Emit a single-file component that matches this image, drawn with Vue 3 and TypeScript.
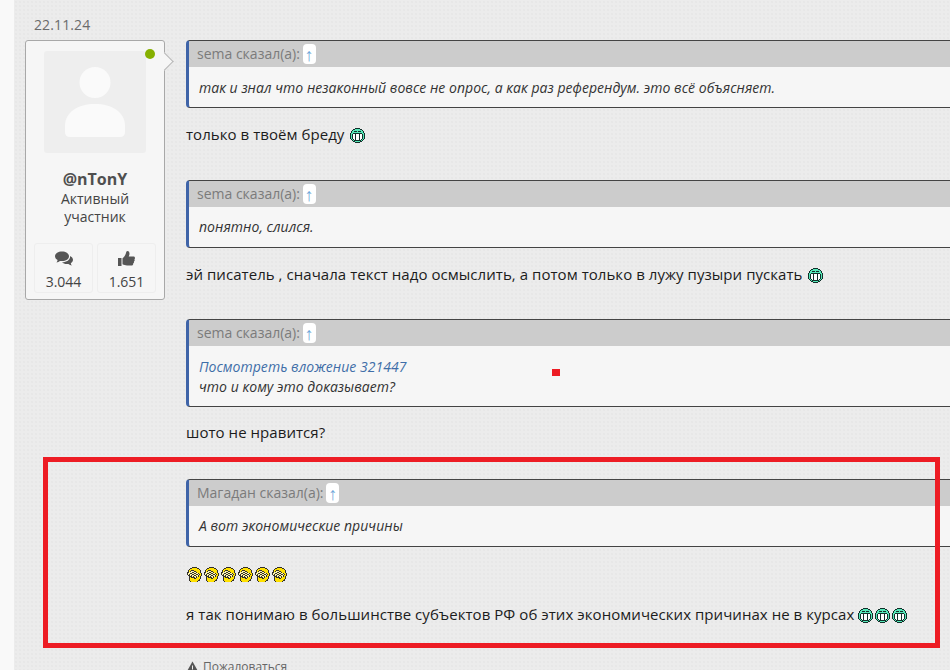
<script setup lang="ts">
interface Pixel { x: number; y: number; c: string }

const colors: Record<string, string> = {
  k: '#12302a',
  t: '#55e8b8',
  w: '#ffffff',
  d: '#33302a',
  y: '#ffe100',
  e: '#fff7b0',
}

const toPixels = (rows: string[]): Pixel[] =>
  rows.flatMap((row, y) =>
    [...row].flatMap((ch, x) => (colors[ch] ? [{ x, y, c: colors[ch] }] : [])),
  )

const grinPixels = toPixels([
  '.....kkkkk.....',
  '...kktttttkk...',
  '..ktttttttttk..',
  '.kttkkktkkkttk.',
  '.ktttttttttttk.',
  'kttkkkkkkkkkttk',
  'ktkwwkwwwkwwktk',
  'ktkwwkwwwkwwktk',
  'ktkwwkwwwkwwktk',
  'ktkwwkwwwkwwktk',
  'ktkwwkwwwkwwktk',
  '.ktkwkwwwkwktk.',
  '..ktkkkkkkktk..',
  '...kktttttkk...',
  '.....kkkkk.....',
])

const palmPixels = toPixels([
  '.....ddddd.....',
  '...ddyyyyydd...',
  '..dyyyyyyyyyd..',
  '.dyydddyyyyyyd.',
  '.dydeeeddyyyyd.',
  'ddeeeddeedyyyd.',
  'deeddeeddeedyyd',
  'dedeeddeeddedyd',
  '.ddedeeddeedyyd',
  '..dddedeededyd.',
  '..dyddddedyyyd.',
  '..dyyyyddyyyyd.',
  '..dyyyyyyyyyd..',
  '..dyyyyyyyydd..',
  '...dyyyyyyd....',
])

const times = (n: number): number[] => Array.from({ length: n }, (_, i) => i)
</script>

<template>
  <div class="page">
    <svg class="defs" width="0" height="0" aria-hidden="true">
      <symbol id="grin" viewBox="0 0 15 15" shape-rendering="crispEdges">
        <rect v-for="p in grinPixels" :key="`${p.x}-${p.y}`" :x="p.x" :y="p.y" width="1" height="1" :fill="p.c" />
      </symbol>
      <symbol id="palm" viewBox="0 0 15 15" shape-rendering="crispEdges">
        <rect v-for="p in palmPixels" :key="`${p.x}-${p.y}`" :x="p.x" :y="p.y" width="1" height="1" :fill="p.c" />
      </symbol>
    </svg>

    <div class="strip"></div>
    <main class="content">
      <div class="date">22.11.24</div>
      <div class="post">
        <aside class="card">
          <span class="online"></span>
          <span class="arrow"></span>
          <div class="avatar">
            <svg width="60" height="71" viewBox="0 0 60 71">
              <circle cx="30" cy="15.500" r="15.500" fill="#fafafa" />
              <path d="M0 65V59C0 45 13 37 30 37s30 8 30 22v6q0 5-5 5H5q-5 0-5-5z" fill="#fafafa" />
            </svg>
          </div>
          <div class="name">@nTonY</div>
          <div class="role">Активный участник</div>
          <div class="stats">
            <div class="stat">
              <svg width="18" height="15" viewBox="0 0 18 15">
                <path d="M7 0c4 0 7 2 7 4.800S11 9.600 7 9.600c-.7 0-1.400 0-2-.2C4 10.300 2.800 10.800 1.500 11c.6-.7 1-1.500 1.100-2.400C1 7.700 0 6.300 0 4.800 0 2 3 0 7 0z" fill="#555" />
                <path d="M15 4.500c1.800.8 3 2.200 3 3.800 0 1.400-.9 2.600-2.200 3.400.1.900.5 1.600 1.100 2.300-1.300-.2-2.500-.7-3.500-1.600-.5.100-1 .2-1.600.2-2 0-3.700-.7-4.700-1.800 4.600 0 8-2.500 8-5.800z" fill="#555" />
              </svg>
              <span>3.044</span>
            </div>
            <div class="stat">
              <svg width="17" height="16" viewBox="0 0 17 16">
                <path d="M0 7h3.500v8H0z" fill="#555" />
                <path d="M4.500 7.200c1.500-1 3-3 3.500-5.200.2-1.200.6-2 1.500-2 1.400 0 2 1.400 2 2.800 0 1-.4 2-.8 2.700H15.500c.9 0 1.500.7 1.500 1.500 0 .5-.2 1-.6 1.300.2.300.3.600.3.900 0 .6-.3 1.100-.8 1.300.1.300.1.500.1.700 0 .6-.4 1.100-.9 1.300 0 .2.100.300.100.500 0 .9-.7 1.500-1.600 1.500H9c-1.700 0-3-.5-4.500-1.200z" fill="#555" />
              </svg>
              <span>1.651</span>
            </div>
          </div>
        </aside>

        <div class="thread">
          <blockquote class="quote q1">
            <div class="qhead">sema сказал(а): <span class="up">↑</span></div>
            <div class="qbody">так и знал что незаконный вовсе не опрос, а как раз референдум. это всё объясняет.</div>
          </blockquote>
          <p class="msg m1">только в твоём бреду <svg class="face"><use href="#grin" /></svg></p>

          <blockquote class="quote q2">
            <div class="qhead">sema сказал(а): <span class="up">↑</span></div>
            <div class="qbody">понятно, слился.</div>
          </blockquote>
          <p class="msg m2">эй писатель , сначала текст надо осмыслить, а потом только в лужу пузыри пускать <svg class="face"><use href="#grin" /></svg></p>

          <blockquote class="quote q3">
            <div class="qhead">sema сказал(а): <span class="up">↑</span></div>
            <div class="qbody two">
              <a class="attach">Посмотреть вложение 321447</a>
              <div>что и кому это доказывает?</div>
            </div>
          </blockquote>
          <p class="msg m3">шото не нравится?</p>

          <blockquote class="quote q4">
            <div class="qhead">Магадан сказал(а): <span class="up">↑</span></div>
            <div class="qbody">А вот экономические причины</div>
          </blockquote>
          <div class="palms">
            <svg v-for="i in times(6)" :key="i" class="pface"><use href="#palm" /></svg>
          </div>
          <p class="msg m4">я так понимаю в большинстве субъектов РФ об этих экономических причинах не в курсах <span class="faces"><svg v-for="i in times(3)" :key="i" class="face tight"><use href="#grin" /></svg></span></p>
          <div class="report">
            <svg width="13" height="12" viewBox="0 0 13 12">
              <path d="M6.500 0.500 13 12H0z" fill="#555" />
              <path d="M6 4.500h1v4H6zM6 9.300h1v1.200H6z" fill="#eee" />
            </svg>
            <span>Пожаловаться</span>
          </div>
        </div>
      </div>
    </main>

    <div class="redbox"></div>
    <div class="reddot"></div>
  </div>
</template>

<style scoped>
.page {
  position: relative;
  display: flex;
  width: 950px;
  height: 670px;
  overflow: hidden;
  font-family: "Open Sans", "Noto Sans", sans-serif;
  color: #222;
  background-color: #f9f9f9;
}
.defs { position: absolute; }
.strip { width: 14px; flex: none; }
.content {
  flex: 1;
  min-width: 0;
  padding-top: 15px;
  background-color: #ececec;
  background-image: radial-gradient(circle, #e7e7e7 0.7px, transparent 0.8px);
  background-size: 4px 4px;
}
.date {
  padding-left: 20px;
  font-size: 14px;
  line-height: 19px;
  letter-spacing: 0.12px;
  color: #6b6b6b;
  margin-bottom: 6px;
}
.post { display: flex; padding-left: 11px; gap: 21px; align-items: flex-start; }
.card {
  position: relative;
  flex: none;
  box-sizing: border-box;
  width: 140px;
  height: 260px;
  padding: 10px 8px 0;
  background: #f6f6f6;
  border: 1px solid #a8a8a8;
  border-radius: 3px;
  text-align: center;
}
.online {
  position: absolute;
  left: 119px;
  top: 8px;
  width: 10px;
  height: 10px;
  border-radius: 50%;
  background: #86b000;
}
.arrow {
  position: absolute;
  right: -7px;
  top: 14px;
  width: 13px;
  height: 13px;
  background: #f6f6f6;
  border-top: 1px solid #b5b5b5;
  border-right: 1px solid #b5b5b5;
  transform: rotate(45deg);
  box-sizing: border-box;
}
.avatar {
  width: 102px;
  height: 102px;
  margin: 0 auto;
  background: #eeeeee;
  border-radius: 3px;
  display: flex;
  align-items: flex-end;
  justify-content: center;
  padding-bottom: 15px;
  box-sizing: border-box;
}
.name {
  margin-top: 16px;
  font-size: 16px;
  line-height: 21px;
  font-weight: 700;
  color: #4f4f4f;
}
.role {
  margin: 0 11px;
  font-size: 14px;
  line-height: 18px;
  color: #444;
}
.stats { display: flex; gap: 4px; margin-top: 17px; }
.stat {
  box-sizing: border-box;
  width: 59px;
  height: 50px;
  border: 1px solid #eeeeee;
  border-radius: 3px;
  display: flex;
  flex-direction: column;
  align-items: center;
  padding-top: 7px;
  font-size: 14px;
  line-height: 19px;
  color: #444;
}
.stat span { margin-top: 5px; }
.stat svg { height: 16px; flex: none; }
.thread { flex: 1; min-width: 0; margin-right: -30px; }
.quote {
  margin: 0;
  box-sizing: border-box;
  border: 1px solid #444;
  border-left: 3px solid #3f64a8;
  border-radius: 4px 0 0 4px;
  background: #f6f6f6;
  overflow: hidden;
}
.qhead {
  height: 26px;
  padding-left: 8px;
  background: #cccccc;
  color: #7b7b7b;
  font-size: 14px;
  line-height: 26px;
  white-space: nowrap;
}
.up {
  display: inline-block;
  vertical-align: top;
  width: 13px;
  height: 20px;
  margin: 3px 0 0 -1px;
  line-height: 21px;
  border-radius: 4px;
  background: #fff;
  color: #6da6d8;
  text-align: center;
  font-size: 18px;
  font-weight: 300;
}
.qbody {
  height: 40px;
  padding-left: 10px;
  font-size: 14px;
  font-style: italic;
  letter-spacing: 0.04px;
  line-height: 39px;
  color: #333;
}
.q1 .qbody { line-height: 41px; }
.qbody.two {
  height: 60px;
  padding-top: 11px;
  line-height: 20px;
  box-sizing: border-box;
}
.attach { display: block; color: #3f6ea8; }
.q1 { height: 68px; }
.q2 { height: 68px; margin-top: 35px; }
.q3 { height: 88px; margin-top: 34px; }
.q4 { height: 68px; margin-top: 36px; }
.msg {
  margin: 0;
  font-size: 15px;
  line-height: 22px;
  letter-spacing: 0.05px;
  color: #1c1c1c;
  white-space: nowrap;
}
.m1 { margin-top: 15px; }
.m2 { margin-top: 15px; }
.m3 { margin-top: 14px; }
.m4 { margin-top: 21px; }
.face { width: 15px; height: 15px; vertical-align: -3px; margin-left: 2px; }
.faces { display: inline-flex; gap: 2px; vertical-align: -3px; }
.face.tight { margin-left: 0; vertical-align: top; }
.palms { display: flex; gap: 2px; margin-top: 20px; height: 15px; margin-left: 1px; }
.pface { width: 15px; height: 15px; }
.report {
  display: flex;
  align-items: center;
  gap: 4px;
  margin-top: 34px;
  font-size: 12px;
  line-height: 16px;
  color: #666;
}
.redbox {
  position: absolute;
  left: 43px;
  top: 457px;
  width: 897px;
  height: 191px;
  box-sizing: border-box;
  border: 5px solid #ed1c24;
}
.reddot {
  position: absolute;
  left: 552px;
  top: 369px;
  width: 8px;
  height: 7px;
  background: #ed1c24;
}
</style>

<style>
html, body { margin: 0; overflow: hidden; }
</style>
